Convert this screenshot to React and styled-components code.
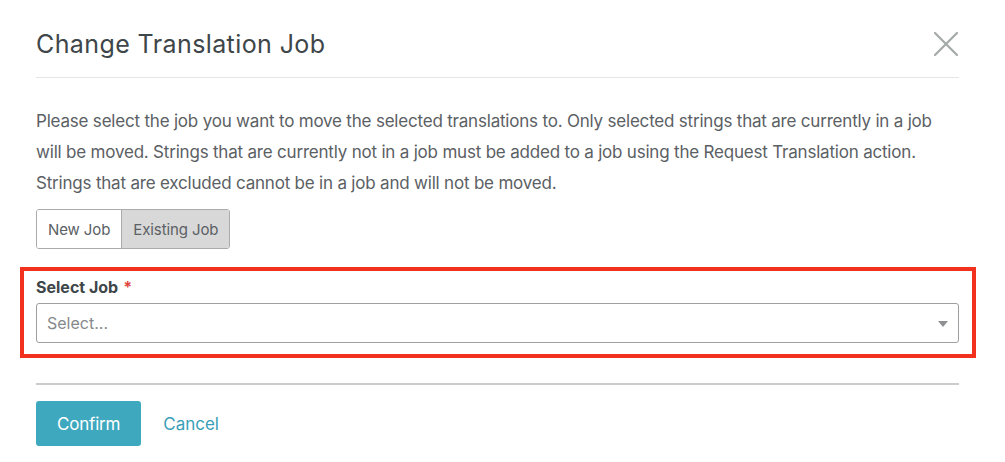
import styled, { createGlobalStyle } from "styled-components";

const GlobalStyle = createGlobalStyle`
  html, body {
    margin: 0;
    padding: 0;
    background: #fff;
  }
  body {
    font-family: Inter, "Noto Sans", sans-serif;
    -webkit-font-smoothing: antialiased;
  }
`;

const Modal = styled.div`
  width: 1005px;
  height: 462px;
  box-sizing: border-box;
  padding: 0 46px 0 36px;
  display: flex;
  flex-direction: column;
`;

const Header = styled.div`
  height: 78px;
  box-sizing: border-box;
  border-bottom: 1px solid #e3e5e6;
  display: flex;
  align-items: center;
  justify-content: space-between;
  padding-top: 10px;
`;

const Title = styled.h2`
  margin: 0;
  font-size: 25px;
  font-weight: 400;
  color: #3e4649;
  letter-spacing: 0.4px;
`;

const CloseButton = styled.button`
  border: 0;
  background: none;
  padding: 0;
  width: 26px;
  height: 26px;
  display: flex;
  cursor: pointer;
`;

const Body = styled.div`
  padding-top: 28px;
`;

const Intro = styled.p`
  margin: 0;
  font-size: 17px;
  line-height: 31px;
  color: #5b6064;
  letter-spacing: -0.2px;
`;

const Toggle = styled.div`
  display: inline-flex;
  margin-top: 10px;
  border: 1px solid #a9abad;
  border-radius: 3px;
  overflow: hidden;
`;

const ToggleButton = styled.button`
  height: 38px;
  border: 0;
  border-left: ${(p) => (p.$first ? "0" : "1px solid #a9abad")};
  background: ${(p) => (p.$active ? "#d8d8d8" : "#fff")};
  color: #5b6064;
  font-family: inherit;
  font-size: 15px;
  padding: 0 ${(p) => (p.$first ? "11px" : "11px")};
  letter-spacing: -0.1px;
  cursor: pointer;
`;

const Highlight = styled.div`
  margin: 18px -17px 0 -16px;
  border: 4px solid #f2311f;
  padding: 5px 13px 11px 12px;
`;

const Label = styled.div`
  font-size: 16px;
  font-weight: 700;
  color: #3e4649;
  letter-spacing: 0;
  line-height: 22px;
  margin-bottom: 5px;

  span {
    color: #e0463c;
    font-weight: 700;
    margin-left: 5px;
  }
`;

const SelectBox = styled.div`
  height: 40px;
  box-sizing: border-box;
  border: 1px solid #9d9fa1;
  border-radius: 3px;
  display: flex;
  align-items: center;
  justify-content: space-between;
  padding: 0 10px 0 10px;
  font-size: 16px;
  color: #85898c;
  letter-spacing: 0;
`;

const Caret = styled.span`
  width: 0;
  height: 0;
  border-left: 5px solid transparent;
  border-right: 5px solid transparent;
  border-top: 6px solid #8e9193;
  margin-top: 2px;
`;

const Footer = styled.div`
  margin-top: 25px;
  border-top: 2px solid #cccccc;
  padding-top: 16px;
  display: flex;
  align-items: center;
  gap: 22px;
`;

const Primary = styled.button`
  height: 45px;
  padding: 0 21px;
  border: 0;
  border-radius: 3px;
  background: #3ea8be;
  color: #fff;
  font-family: inherit;
  font-size: 17px;
  letter-spacing: -0.2px;
  cursor: pointer;
`;

const LinkButton = styled.button`
  border: 0;
  background: none;
  padding: 0;
  color: #3aa0b8;
  font-family: inherit;
  font-size: 17px;
  letter-spacing: 0;
  cursor: pointer;
`;

export default function App() {
  return (
    <>
      <GlobalStyle />
      <Modal>
        <Header>
          <Title>Change Translation Job</Title>
          <CloseButton aria-label="Close">
            <svg width="26" height="26" viewBox="0 0 26 26">
              <path
                d="M2 2 L24 24 M24 2 L2 24"
                stroke="#a4aaa8"
                strokeWidth="2.2"
                strokeLinecap="round"
              />
            </svg>
          </CloseButton>
        </Header>
        <Body>
          <Intro>
            Please select the job you want to move the selected translations to.
            Only selected strings that are currently in a job will be moved.
            Strings that are currently not in a job must be added to a job using
            the Request Translation action. Strings that are excluded cannot be
            in a job and will not be moved.
          </Intro>
          <Toggle>
            <ToggleButton $first>New Job</ToggleButton>
            <ToggleButton $active>Existing Job</ToggleButton>
          </Toggle>
          <Highlight>
            <Label>
              Select Job<span>*</span>
            </Label>
            <SelectBox>
              Select...
              <Caret />
            </SelectBox>
          </Highlight>
        </Body>
        <Footer>
          <Primary>Confirm</Primary>
          <LinkButton>Cancel</LinkButton>
        </Footer>
      </Modal>
    </>
  );
}
